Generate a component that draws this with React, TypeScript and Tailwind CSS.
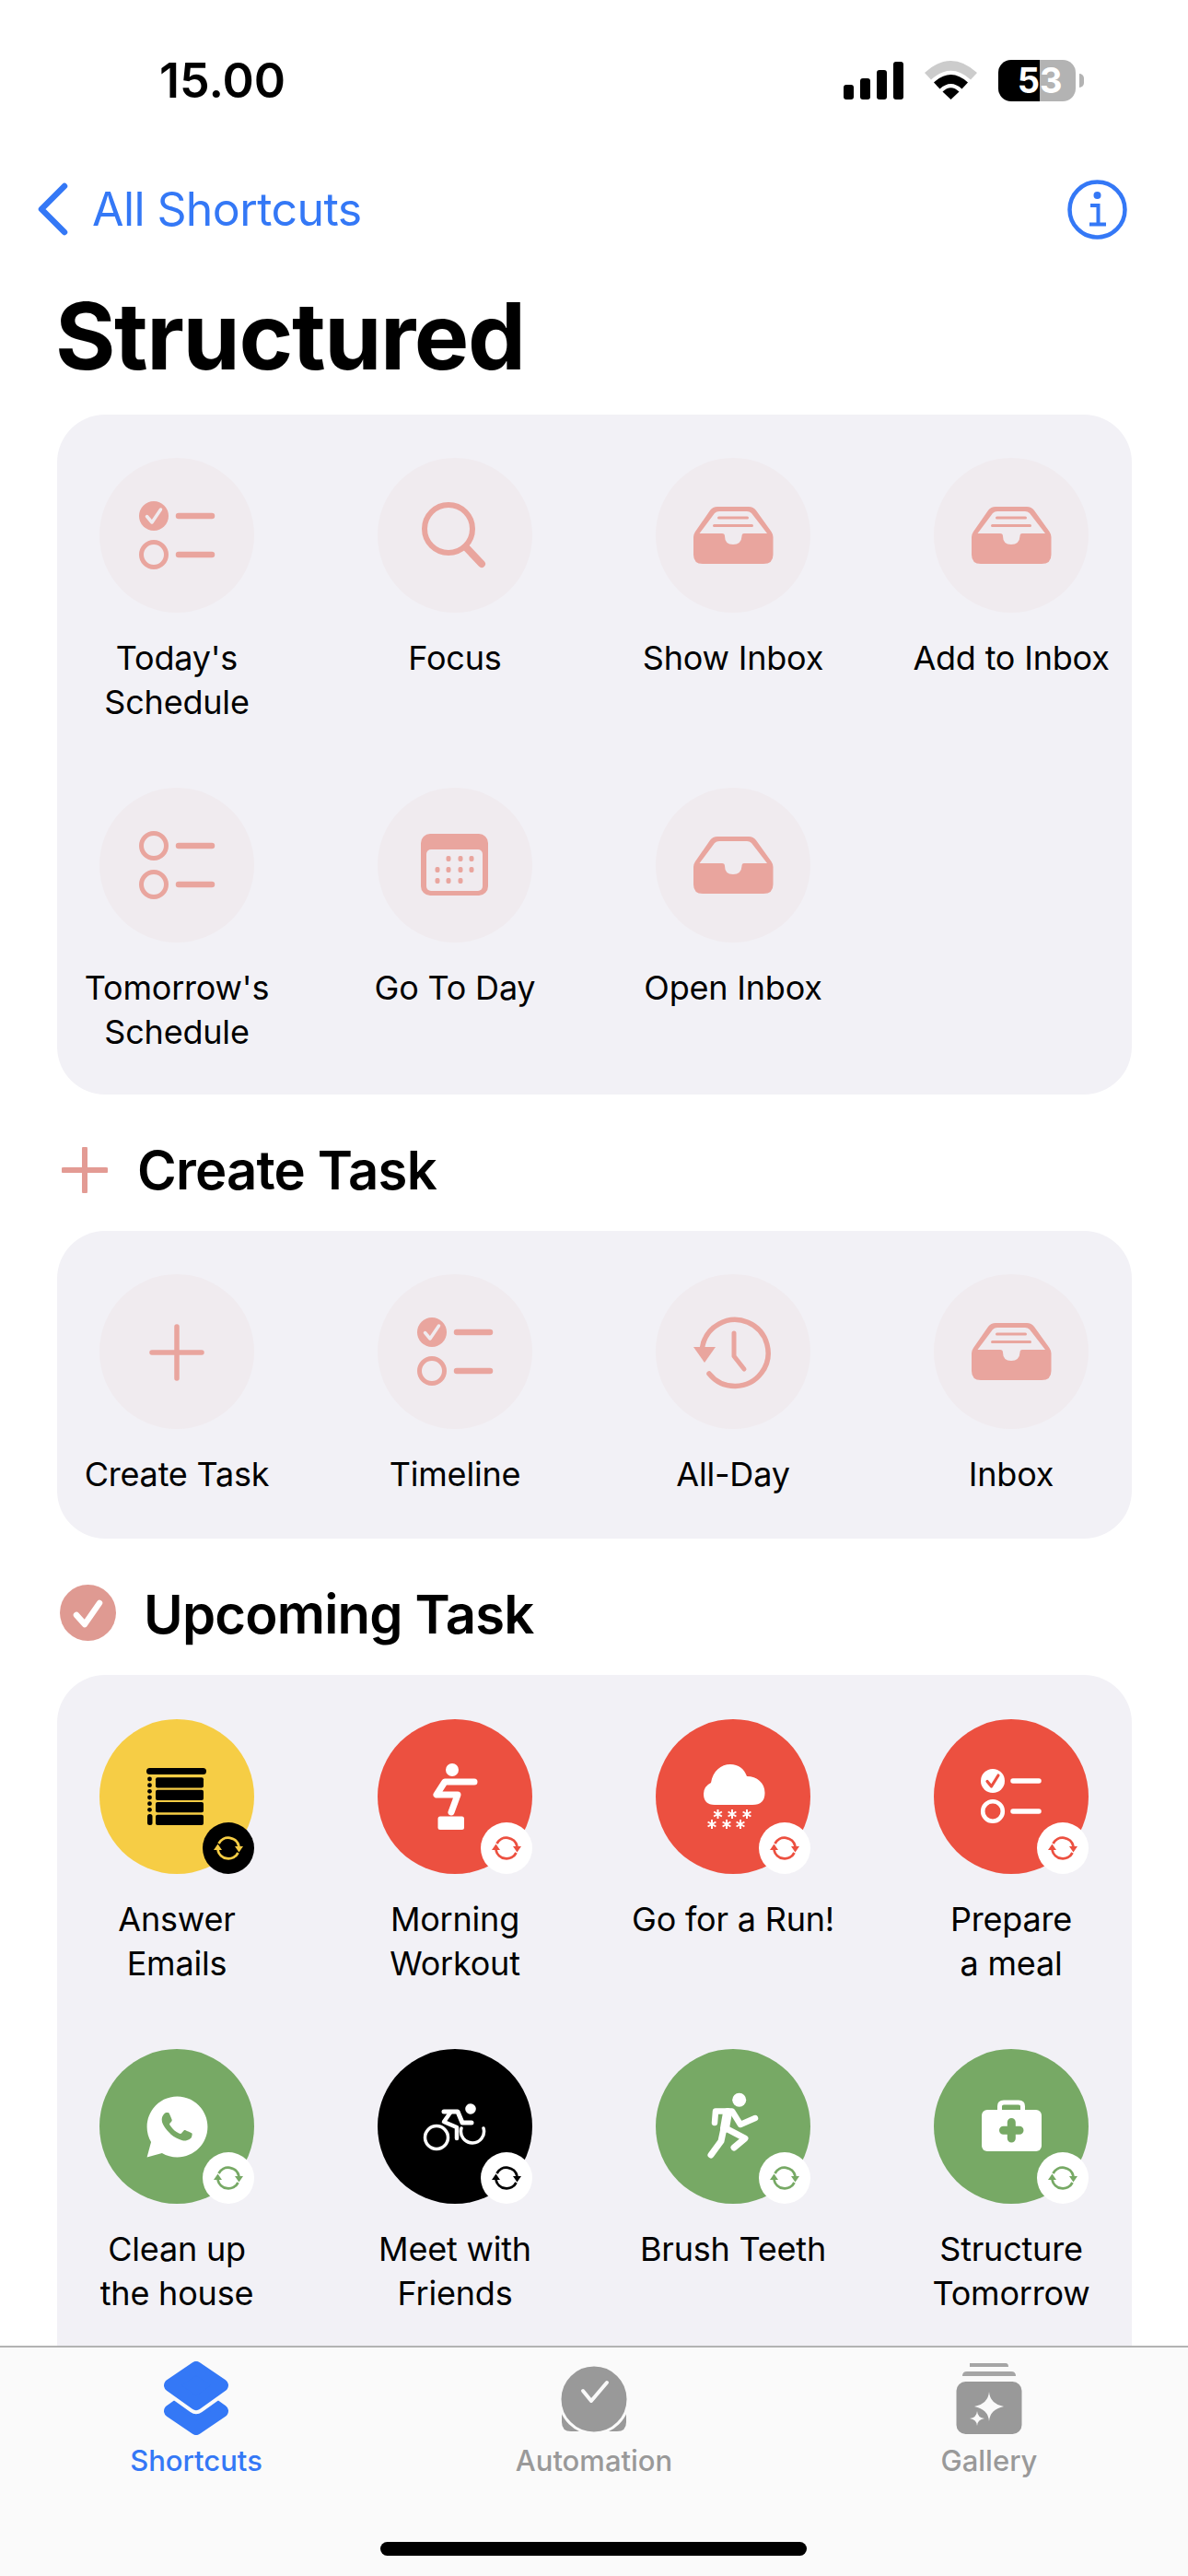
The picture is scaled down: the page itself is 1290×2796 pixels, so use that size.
import type { ReactNode } from "react";
import { RiWhatsappFill } from "react-icons/ri";

const SOFT = "#e9a59e";
const SOFT_BG = "#f0ebef";
const RED = "#ec5040";
const GREEN = "#77a965";
const YELLOW = "#f6cd45";

function Svg({ children }: { children: ReactNode }) {
  return (
    <svg width="168" height="168" viewBox="0 0 168 168" fill="none">
      {children}
    </svg>
  );
}

function ListIcon({ checked = true, color = SOFT, cut = SOFT_BG }: { checked?: boolean; color?: string; cut?: string }) {
  return (
    <Svg>
      {checked ? (
        <>
          <circle cx="59" cy="63" r="16" fill={color} />
          <path d="M51.5 63.5 L57 70 L66.5 56" stroke={cut} strokeWidth="3.5" strokeLinecap="round" strokeLinejoin="round" />
        </>
      ) : (
        <circle cx="59" cy="63" r="13.5" stroke={color} strokeWidth="5" />
      )}
      <circle cx="59" cy="105" r="13.5" stroke={color} strokeWidth="5" />
      <path d="M86 63 H122 M86 105 H122" stroke={color} strokeWidth="6.5" strokeLinecap="round" />
    </Svg>
  );
}

function SearchIcon() {
  return (
    <Svg>
      <circle cx="77" cy="77" r="26" stroke={SOFT} strokeWidth="6" />
      <path d="M96 97 L113 115" stroke={SOFT} strokeWidth="8" strokeLinecap="round" />
    </Svg>
  );
}

function InboxIcon({ lines = true }: { lines?: boolean }) {
  return (
    <Svg>
      <path
        fillRule="evenodd"
        d="M41 86 Q41 83 43 80 L59 57 Q62 53 67 53 H101 Q106 53 109 57 L125.5 80 Q127.5 83 127.5 86 V105 Q127.5 115 117 115 H51 Q41 115 41 105 Z M47.5 82 L64 60 Q66 58 69 58 H99 Q102 58 104 60 L121 82 H96 Q93.5 82 93.5 85 Q93 94 84 94 Q75 94 75 85 Q75 82 72 82 Z"
        fill={SOFT}
      />
      {lines && <path d="M68.5 65 H99.5 M63.5 73.5 H104.5" stroke={SOFT} strokeWidth="3" strokeLinecap="round" />}
    </Svg>
  );
}

function CalendarIcon() {
  const dots = [
    [77, 77], [90, 77], [102, 77],
    [65, 89], [77, 89], [90, 89], [102, 89],
    [65, 101], [77, 101], [90, 101],
  ];
  return (
    <Svg>
      <rect x="47" y="50" width="73" height="67" rx="10" fill={SOFT} />
      <rect x="53" y="67" width="61" height="45" rx="5" fill={SOFT_BG} />
      {dots.map(([x, y]) => (
        <rect key={`${x}-${y}`} x={x - 2.5} y={y - 3} width="5" height="6" rx="2" fill={SOFT} />
      ))}
    </Svg>
  );
}

function PlusIcon() {
  return (
    <Svg>
      <path d="M84 57 V113 M57 85 H111" stroke={SOFT} strokeWidth="5.5" strokeLinecap="round" />
    </Svg>
  );
}

function ClockIcon() {
  return (
    <Svg>
      <path d="M50.5 80 A36 36 0 1 1 58 108" stroke={SOFT} strokeWidth="5.5" strokeLinecap="round" />
      <path d="M41 79 H65 L53 96 Z" fill={SOFT} strokeLinejoin="round" />
      <path d="M85 64 V89 L96 103" stroke={SOFT} strokeWidth="5" strokeLinecap="round" strokeLinejoin="round" />
    </Svg>
  );
}

function TableIcon() {
  const dots = [65, 71.7, 78.3, 85, 91.7, 98.3];
  const rows = [63.3, 76.7, 90, 103.7];
  return (
    <Svg>
      <rect x="51" y="53" width="65" height="7" rx="3.5" fill="#000" />
      {dots.map((y) => (
        <circle key={y} cx="54.5" cy={y} r="2.4" fill="#000" />
      ))}
      <rect x="52" y="103" width="5.5" height="12" rx="2.5" fill="#000" />
      {rows.map((y) => (
        <rect key={y} x="61" y={y} width="52" height="11.2" rx="2" fill="#000" />
      ))}
    </Svg>
  );
}

function SquatIcon() {
  return (
    <Svg>
      <circle cx="81" cy="55" r="7" fill="#fff" />
      <path d="M105 68 H73 L64 82 H87 L80 101" stroke="#fff" strokeWidth="7" strokeLinecap="round" strokeLinejoin="round" />
      <rect x="65.5" y="105.5" width="28.5" height="14.5" rx="2.5" fill="#fff" />
    </Svg>
  );
}

function SnowIcon() {
  const flakes = [
    [67.5, 103], [83, 103], [99, 103],
    [61, 114], [77, 114], [92, 114],
  ];
  return (
    <Svg>
      <path
        d="M64 93 Q52 93 52 81 Q52 73 60 69 C62 56 71 49 81 49 C90 49 96 54 99 62 C110 62 118.5 69 118.5 80 Q118.5 93 105 93 Z"
        fill="#fff"
      />
      {flakes.map(([x, y]) => (
        <path
          key={`${x}-${y}`}
          d={`M${x} ${y - 5} V${y + 5} M${x - 4.4} ${y - 2.5} L${x + 4.4} ${y + 2.5} M${x - 4.4} ${y + 2.5} L${x + 4.4} ${y - 2.5}`}
          stroke="#fff"
          strokeWidth="2"
        />
      ))}
    </Svg>
  );
}

function RedListIcon() {
  return (
    <Svg>
      <circle cx="64" cy="67" r="13" fill="#fff" />
      <path d="M58 67.5 L62.5 73 L70 61" stroke={RED} strokeWidth="3.2" strokeLinecap="round" strokeLinejoin="round" />
      <circle cx="64" cy="100" r="10.8" stroke="#fff" strokeWidth="4.6" />
      <path d="M86 67 H114 M86 100 H114" stroke="#fff" strokeWidth="5.5" strokeLinecap="round" />
    </Svg>
  );
}

function BikeIcon() {
  return (
    <Svg>
      <circle cx="101" cy="65" r="5.8" fill="#fff" />
      <circle cx="64" cy="96" r="12.5" stroke="#fff" strokeWidth="3.5" />
      <path d="M91 86 A12.5 12.5 0 1 0 115 86" stroke="#fff" strokeWidth="3.5" strokeLinecap="round" />
      <path d="M72 68 H87 L92 80 H102" stroke="#fff" strokeWidth="5" strokeLinecap="round" strokeLinejoin="round" />
      <path d="M79 69 L72 79 L86 85 V97" stroke="#fff" strokeWidth="4.5" strokeLinecap="round" strokeLinejoin="round" />
    </Svg>
  );
}

function RunnerIcon() {
  return (
    <Svg>
      <circle cx="90.7" cy="55.3" r="7.5" fill="#fff" />
      <path d="M64 80 L65 67.5 H83 L92 82 L108 75" stroke="#fff" strokeWidth="6.5" strokeLinecap="round" strokeLinejoin="round" />
      <path d="M78 69 L75 86" stroke="#fff" strokeWidth="10" strokeLinecap="round" />
      <path d="M74 86 L71 100 L60 115" stroke="#fff" strokeWidth="7" strokeLinecap="round" strokeLinejoin="round" />
      <path d="M76 86 L97 97 L85 107" stroke="#fff" strokeWidth="7" strokeLinecap="round" strokeLinejoin="round" />
    </Svg>
  );
}

function MedicalIcon() {
  return (
    <Svg>
      <path d="M71.5 68 V62 Q71.5 58 76 58 H92 Q96.5 58 96.5 62 V68" stroke="#fff" strokeWidth="5" />
      <rect x="52" y="66" width="65" height="45" rx="6" fill="#fff" />
      <path d="M84.3 79.5 V97 M75.5 88.3 H93" stroke={GREEN} strokeWidth="9" strokeLinecap="round" />
    </Svg>
  );
}

function SyncBadge({ bg, color }: { bg: string; color: string }) {
  return (
    <svg width="56" height="56" viewBox="0 0 56 56" fill="none">
      <circle cx="28" cy="28" r="28" fill={bg} />
      <path d="M17.5 23 A11.8 11.8 0 0 1 39.5 26 M38.5 33 A11.8 11.8 0 0 1 16.5 30" stroke={color} strokeWidth="2.8" />
      <path d="M35 26 H44 L39.5 32.5 Z M12 30 H21 L16.5 23.5 Z" fill={color} />
    </svg>
  );
}

type Item = { label: string; icon: ReactNode; bg?: string; badge?: string; badgeBg?: string };

function Shortcut({ label, icon, bg = SOFT_BG, badge, badgeBg = "#fff" }: Item) {
  return (
    <div className="flex flex-col items-center">
      <div className="relative flex h-[168px] w-[168px] items-center justify-center rounded-full" style={{ backgroundColor: bg }}>
        {icon}
        {badge && (
          <div className="absolute right-0 bottom-0 flex">
            <SyncBadge bg={badgeBg} color={badge} />
          </div>
        )}
      </div>
      <div className="mt-[25px] text-center text-[36px] leading-[48px] tracking-[-0.2px] whitespace-pre-line text-black">{label}</div>
    </div>
  );
}

function Card({ items, padding = "pt-[47px] pb-[44px]" }: { items: Item[]; padding?: string }) {
  return (
    <div className={`mx-[62px] grid w-[1167px] grid-cols-[repeat(4,260px)] gap-x-[42px] gap-y-[69px] rounded-[52px] bg-[#f2f1f6] ${padding}`}>
      {items.map((item) => (
        <Shortcut key={item.label} {...item} />
      ))}
    </div>
  );
}

const topItems: Item[] = [
  { label: "Today's\nSchedule", icon: <ListIcon /> },
  { label: "Focus", icon: <SearchIcon /> },
  { label: "Show Inbox", icon: <InboxIcon /> },
  { label: "Add to Inbox", icon: <InboxIcon /> },
  { label: "Tomorrow's\nSchedule", icon: <ListIcon checked={false} /> },
  { label: "Go To Day", icon: <CalendarIcon /> },
  { label: "Open Inbox", icon: <InboxIcon lines={false} /> },
];

const createItems: Item[] = [
  { label: "Create Task", icon: <PlusIcon /> },
  { label: "Timeline", icon: <ListIcon /> },
  { label: "All-Day", icon: <ClockIcon /> },
  { label: "Inbox", icon: <InboxIcon /> },
];

const upcomingItems: Item[] = [
  { label: "Answer\nEmails", icon: <TableIcon />, bg: YELLOW, badge: YELLOW, badgeBg: "#000" },
  { label: "Morning\nWorkout", icon: <SquatIcon />, bg: RED, badge: RED },
  { label: "Go for a Run!", icon: <SnowIcon />, bg: RED, badge: RED },
  { label: "Prepare\na meal", icon: <RedListIcon />, bg: RED, badge: RED },
  { label: "Clean up\nthe house", icon: <RiWhatsappFill size={79} color="#fff" />, bg: GREEN, badge: GREEN },
  { label: "Meet with\nFriends", icon: <BikeIcon />, bg: "#000", badge: "#000" },
  { label: "Brush Teeth", icon: <RunnerIcon />, bg: GREEN, badge: GREEN },
  { label: "Structure\nTomorrow", icon: <MedicalIcon />, bg: GREEN, badge: GREEN },
];

function StatusBar() {
  return (
    <div className="flex h-[174px] items-center justify-between pr-[113px] pl-[173px]">
      <span className="mt-[2px] text-[52px] font-semibold text-black">15.00</span>
      <div className="flex items-center gap-[23px]">
        <div className="flex items-end gap-[7px]">
          <div className="h-[16px] w-[11px] rounded-[3px] bg-black" />
          <div className="h-[23px] w-[11px] rounded-[3px] bg-black" />
          <div className="h-[32px] w-[11px] rounded-[3px] bg-black" />
          <div className="h-[41px] w-[11px] rounded-[3px] bg-black" />
        </div>
        <svg width="57" height="42" viewBox="0 0 57 42" fill="none">
          <path d="M0 13 Q28.5 -13 57 13 L50 20.5 Q28.5 1 7 20.5 Z" fill="#cccccc" />
          <path d="M10 23.5 Q28.5 6.5 47 23.5 L40.5 30.5 Q28.5 19.5 16.5 30.5 Z" fill="#000" />
          <path d="M19.5 33.5 Q28.5 25 37.5 33.5 L28.5 42 Z" fill="#000" />
        </svg>
        <div className="flex items-center gap-[4px]">
          <div className="flex h-[45px] w-[84px] overflow-hidden rounded-[14px] text-[38px] leading-[45px] font-bold text-white">
            <div className="flex w-[45px] justify-end bg-black">5</div>
            <div className="flex w-[39px] bg-[#b3b3b3]">3</div>
          </div>
          <div className="h-[15px] w-[5px] rounded-r-full bg-[#b3b3b3]" />
        </div>
      </div>
    </div>
  );
}

function NavBar() {
  return (
    <div className="flex h-[106px] items-center justify-between pr-[66px] pl-[40px]">
      <div className="flex items-center gap-[26px]">
        <svg width="34" height="58" viewBox="0 0 34 58" fill="none">
          <path d="M30 4 L5 29 L30 54" stroke="#3478f6" strokeWidth="6.5" strokeLinecap="round" strokeLinejoin="round" />
        </svg>
        <span className="text-[50px] tracking-[-0.6px] text-[#3478f6]">All Shortcuts</span>
      </div>
      <svg width="65" height="65" viewBox="0 0 65 65" fill="none">
        <circle cx="32.5" cy="32.5" r="30" stroke="#3478f6" strokeWidth="4.5" />
        <circle cx="32.5" cy="17" r="4" fill="#3478f6" />
        <path d="M25 28 H33.5 V48 M24 48.5 H42" stroke="#3478f6" strokeWidth="4" />
      </svg>
    </div>
  );
}

function SectionTitle({ icon, title, gap }: { icon: ReactNode; title: string; gap: string }) {
  return (
    <div className={`flex h-[148px] items-center pt-[16px] ${gap}`}>
      {icon}
      <span className="text-[58px] font-semibold tracking-[-0.8px] text-black">{title}</span>
    </div>
  );
}

function TabBar() {
  return (
    <div className="grid h-[250px] shrink-0 grid-cols-[426px_438px_420px] items-start border-t-2 border-[#b3b3b3] bg-[#fafafa] pt-[15px]">
      <div className="flex flex-col items-center">
        <svg width="72" height="80" viewBox="0 0 72 80" fill="none">
          <path d="M36 34 L64 54 L36 73 L8 54 Z" fill="#3478f6" stroke="#3478f6" strokeWidth="14" strokeLinejoin="round" />
          <path d="M36 7 L64 26 L36 46 L8 26 Z" fill="#fafafa" stroke="#fafafa" strokeWidth="22" strokeLinejoin="round" />
          <path d="M36 7 L64 26 L36 46 L8 26 Z" fill="#3478f6" stroke="#3478f6" strokeWidth="14" strokeLinejoin="round" />
        </svg>
        <span className="mt-[8px] text-[31px] leading-[40px] font-medium text-[#3478f6]">Shortcuts</span>
      </div>
      <div className="flex flex-col items-center">
        <svg width="72" height="80" viewBox="0 0 72 80" fill="none">
          <path d="M1 50 H71 V66 Q71 76 61 76 H11 Q1 76 1 66 Z" fill="#999" />
          <circle cx="36" cy="41" r="37" fill="#999" stroke="#fafafa" strokeWidth="3" />
          <path d="M24 32 L33 43 L50 23" stroke="#fafafa" strokeWidth="4" strokeLinecap="round" strokeLinejoin="round" />
        </svg>
        <span className="mt-[8px] text-[31px] leading-[40px] font-medium text-[#999]">Automation</span>
      </div>
      <div className="flex flex-col items-center">
        <svg width="72" height="80" viewBox="0 0 72 80" fill="none">
          <path d="M15 2 Q15 2 18 2 H54 Q57 2 57 6 H15 Z" fill="#a5a5a5" />
          <path d="M7 16 Q7 11 12 11 H60 Q65 11 65 16 Z" fill="#a5a5a5" />
          <rect x="0.5" y="22" width="71" height="57" rx="10" fill="#999" />
          <path d="M36 33 Q37 46 52 49 Q37 52 36 65 Q35 52 20 49 Q35 46 36 33 Z" fill="#fafafa" />
          <path d="M23 54 Q23.5 61 31 62 Q23.5 63 23 70 Q22.5 63 15 62 Q22.5 61 23 54 Z" fill="#fafafa" />
        </svg>
        <span className="mt-[8px] text-[31px] leading-[40px] font-medium text-[#999]">Gallery</span>
      </div>
      <div className="col-span-3 mt-[46px] flex justify-center pl-[5px]">
        <div className="h-[15px] w-[463px] rounded-full bg-black" />
      </div>
    </div>
  );
}

export default function App() {
  return (
    <div className="flex h-[2796px] w-[1290px] flex-col overflow-hidden bg-white font-['Inter',sans-serif]">
      <div className="min-h-0 flex-1 overflow-hidden">
        <StatusBar />
        <NavBar />
        <div className="flex h-[170px] items-center pl-[60px]">
          <h1 className="text-[100px] font-bold tracking-[-1.4px] text-black">Structured</h1>
        </div>
        <Card items={topItems} />
        <SectionTitle
          gap="gap-[32px] pl-[67px]"
          title="Create Task"
          icon={
            <svg width="50" height="50" viewBox="0 0 50 50" fill="none">
              <path d="M25 2 V48 M2 25 H48" stroke="#e39b94" strokeWidth="6" strokeLinecap="round" />
            </svg>
          }
        />
        <Card items={createItems} padding="pt-[47px] pb-[46px]" />
        <SectionTitle
          gap="gap-[30px] pl-[65px]"
          title="Upcoming Task"
          icon={
            <svg className="mb-[3px]" width="61" height="61" viewBox="0 0 61 61" fill="none">
              <circle cx="30.5" cy="30.5" r="30.5" fill="#df9a92" />
              <path d="M18 33 L27 43 L43 20" stroke="#fff" strokeWidth="6.5" strokeLinecap="round" strokeLinejoin="round" />
            </svg>
          }
        />
        <Card items={upcomingItems} padding="pt-[48px] pb-[120px]" />
      </div>
      <TabBar />
    </div>
  );
}
